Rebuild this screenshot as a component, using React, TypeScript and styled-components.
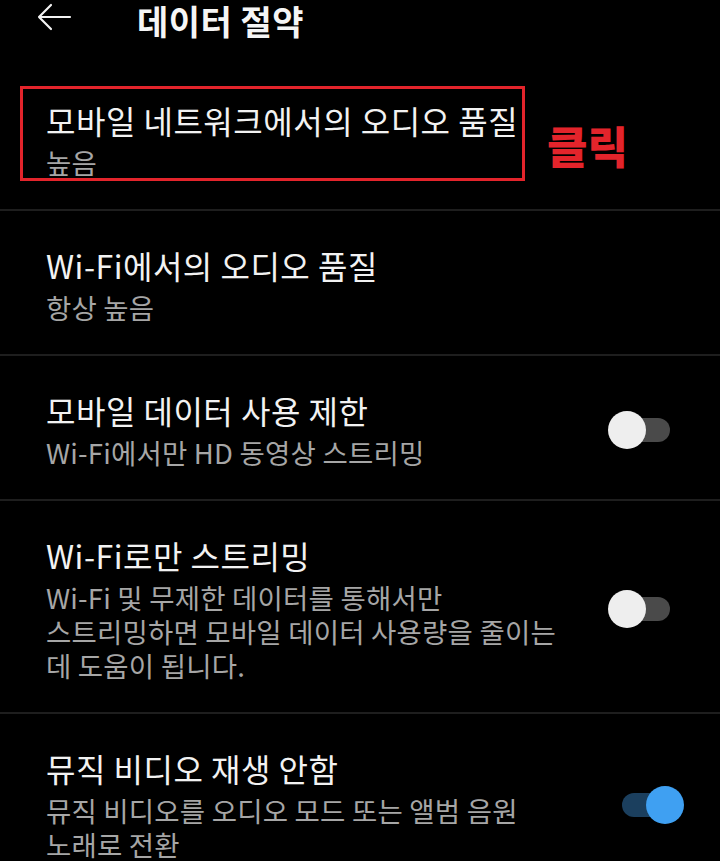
import styled, { createGlobalStyle } from 'styled-components';

const GlobalStyle = createGlobalStyle`
  html, body {
    margin: 0;
    padding: 0;
    background: #000;
  }
  body {
    font-family: 'Noto Sans CJK KR', 'Noto Sans', sans-serif;
    color: #f2f2f2;
    overflow: hidden;
  }
`;

type Setting = {
  title: string;
  description: string[];
  toggle?: 'on' | 'off';
  highlighted?: boolean;
};

const settings: Setting[] = [
  { title: '모바일 네트워크에서의 오디오 품질', description: ['높음'], highlighted: true },
  { title: 'Wi-Fi에서의 오디오 품질', description: ['항상 높음'] },
  { title: '모바일 데이터 사용 제한', description: ['Wi-Fi에서만 HD 동영상 스트리밍'], toggle: 'off' },
  {
    title: 'Wi-Fi로만 스트리밍',
    description: ['Wi-Fi 및 무제한 데이터를 통해서만', '스트리밍하면 모바일 데이터 사용량을 줄이는', '데 도움이 됩니다.'],
    toggle: 'off',
  },
  {
    title: '뮤직 비디오 재생 안함',
    description: ['뮤직 비디오를 오디오 모드 또는 앨범 음원', '노래로 전환'],
    toggle: 'on',
  },
];

const App = () => {
  return (
    <>
      <GlobalStyle />
      <Screen>
        <Header>
          <BackButton aria-label="뒤로">
            <svg width="36" height="30" viewBox="0 0 36 30" fill="none">
              <path d="M34 15H3M15 3L3 15l12 12" stroke="#f2f2f2" strokeWidth="2.2" strokeLinecap="round" strokeLinejoin="round" />
            </svg>
          </BackButton>
          <HeaderTitle>데이터 절약</HeaderTitle>
        </Header>
        {settings.map((item) => (
          <Row key={item.title}>
            <TextBlock>
              <Title>{item.title}</Title>
              {item.description.map((line) => (
                <Description key={line}>{line}</Description>
              ))}
            </TextBlock>
            {item.toggle && (
              <Switch>
                <Track $on={item.toggle === 'on'} />
                <Knob $on={item.toggle === 'on'} />
              </Switch>
            )}
            {item.highlighted && (
              <>
                <Highlight />
                <ClickLabel>클릭</ClickLabel>
              </>
            )}
          </Row>
        ))}
      </Screen>
    </>
  );
};

const Screen = styled.div`
  width: 720px;
  min-height: 861px;
  background: #000;
`;

const Header = styled.div`
  height: 46px;
  padding-bottom: 20px;
  display: flex;
  align-items: flex-start;
`;

const BackButton = styled.div`
  width: 36px;
  height: 30px;
  margin-left: 36px;
  margin-top: 2px;
  display: flex;
`;

const HeaderTitle = styled.div`
  margin-left: 65px;
  font-size: 34px;
  line-height: 42px;
  font-weight: 700;
  letter-spacing: 0.5px;
  color: #f5f5f5;
`;

const Row = styled.div`
  position: relative;
  display: flex;
  align-items: center;
  padding: 34px 52px 30px 46px;
  border-bottom: 2px solid #1e1e1e;
`;

const TextBlock = styled.div`
  flex: 1;
  display: flex;
  flex-direction: column;
`;

const Title = styled.div`
  font-size: 32px;
  line-height: 40px;
  height: 40px;
  margin-bottom: 5px;
  letter-spacing: 0.5px;
  color: #f2f2f2;
  white-space: nowrap;
`;

const Description = styled.div`
  font-size: 27.5px;
  line-height: 34px;
  height: 34px;
  letter-spacing: 0.2px;
  color: #a6a6a6;
  white-space: nowrap;
`;

const Switch = styled.div`
  position: relative;
  width: 76px;
  height: 38px;
  flex-shrink: 0;
  margin-right: -16px;
`;

const Track = styled.div<{ $on: boolean }>`
  position: absolute;
  left: 14px;
  top: 7px;
  width: 48px;
  height: 24px;
  border-radius: 12px;
  background: ${({ $on }) => ($on ? '#1b3f5e' : '#4a4a4a')};
`;

const Knob = styled.div<{ $on: boolean }>`
  position: absolute;
  top: 0;
  left: ${({ $on }) => ($on ? '38px' : '0')};
  width: 38px;
  height: 38px;
  border-radius: 50%;
  background: ${({ $on }) => ($on ? '#3fa0f2' : '#eeeeee')};
`;

const Highlight = styled.div`
  position: absolute;
  left: 20px;
  top: 20px;
  width: 499px;
  height: 89px;
  border: 3px solid #e3242b;
`;

const ClickLabel = styled.div`
  position: absolute;
  left: 547px;
  top: 51px;
  font-size: 44px;
  line-height: 56px;
  font-weight: 900;
  color: #e3242b;
`;

export default App;
